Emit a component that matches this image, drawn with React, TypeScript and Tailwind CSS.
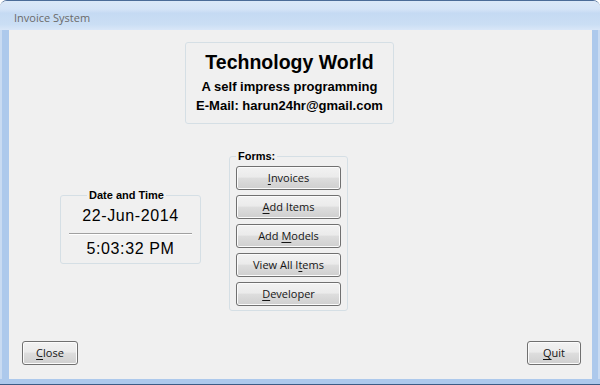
import React from "react";

const btn =
  "flex h-[24px] items-center justify-center rounded-[3px] border border-[#707070] bg-[linear-gradient(180deg,#f2f2f2_0%,#ebebeb_45%,#dddddd_52%,#cfcfcf_100%)] shadow-[inset_0_0_0_1px_#fbfbfb] font-['Open_Sans',sans-serif] text-[11px] leading-[14px] text-[#151515]";

const u = "underline underline-offset-[2px] decoration-[1px]";

export default function App() {
  return (
    <div className="h-[385px] w-[600px] overflow-hidden bg-white">
      <div className="flex h-full flex-col overflow-hidden rounded-t-[7px] border-t border-[#4c6c98]">
        <div className="flex h-[29px] items-center bg-[linear-gradient(180deg,#dbe8f8_0%,#d5e4f7_28%,#c5daf3_42%,#cadef4_80%,#d9e7f8_100%)] pl-[14px] pt-[4px]">
          <span className="font-['Open_Sans',sans-serif] text-[11px] leading-[14px] text-[#6a6a6a]">
            Invoice System
          </span>
        </div>
        <div className="flex flex-1">
          <div className="w-[9px] border-l-[2px] border-[#c9dbf2] bg-[#adc9ec]" />
          <div className="flex flex-1 flex-col bg-[#f0f0f0]">
            <div className="ml-[176px] mt-[12px] flex h-[82px] w-[209px] flex-col items-center rounded-[3px] border border-[#d5dfe5] pt-[8px] font-['Liberation_Sans',Arial,sans-serif] font-bold text-black">
              <div className="text-[19.5px] leading-[22px]">Technology World</div>
              <div className="mt-[6px] text-[13px] leading-[16px]">A self impress programming</div>
              <div className="mt-[3px] text-[13px] leading-[16px]">E-Mail: harun24hr@gmail.com</div>
            </div>

            <div className="mt-[26px] flex items-start">
              <fieldset className="ml-[51px] mt-[39px] h-[75px] w-[141px] rounded-[3px] border border-[#d5dfe5] font-['Liberation_Sans',Arial,sans-serif] text-black">
                <legend className="ml-[26px] px-[2px] text-[11px] font-bold leading-[13px]">Date and Time</legend>
                <div className="mt-[4px] text-center text-[16px] leading-[20px] tracking-[0.6px]">22-Jun-2014</div>
                <div className="mx-[8px] mt-[7px] border-t border-b border-t-[#a0a0a0] border-b-white" />
                <div className="mt-[4px] text-center text-[16px] leading-[20px] tracking-[0.6px]">5:03:32 PM</div>
              </fieldset>

              <fieldset className="ml-[28px] h-[161px] w-[119px] rounded-[3px] border border-[#d5dfe5]">
                <legend className="ml-[6px] px-[2px] font-['Liberation_Sans',Arial,sans-serif] text-[11px] font-bold leading-[13px] text-black">
                  Forms:
                </legend>
                <div className="mt-[3px] flex flex-col gap-[5px] px-[6px]">
                  <button className={btn}>
                    <span>
                      <span className={u}>I</span>nvoices
                    </span>
                  </button>
                  <button className={btn}>
                    <span>
                      <span className={u}>A</span>dd Items
                    </span>
                  </button>
                  <button className={btn}>
                    <span>
                      Add <span className={u}>M</span>odels
                    </span>
                  </button>
                  <button className={btn}>
                    <span>
                      View All I<span className={u}>t</span>ems
                    </span>
                  </button>
                  <button className={btn}>
                    <span>
                      <span className={u}>D</span>eveloper
                    </span>
                  </button>
                </div>
              </fieldset>
            </div>

            <div className="mt-[30px] flex justify-between pl-[13px] pr-[11px]">
              <button className={btn + " w-[56px]"}>
                <span>
                  <span className={u}>C</span>lose
                </span>
              </button>
              <button className={btn + " w-[54px]"}>
                <span>
                  <span className={u}>Q</span>uit
                </span>
              </button>
            </div>
          </div>
          <div className="w-[8px] border-r-[2px] border-[#c9dbf2] bg-[#adc9ec]" />
        </div>
        <div className="h-[5px] bg-[#adc9ec]" />
        <div className="h-px bg-[#3d5c85]" />
      </div>
    </div>
  );
}
